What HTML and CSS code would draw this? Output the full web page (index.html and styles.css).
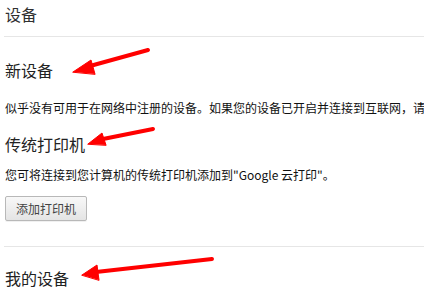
FILE: index.html
```html
<!DOCTYPE html>
<html>
<head>
<meta charset="utf-8">
<link rel="stylesheet" href="styles.css">
</head>
<body>
<div class="page">
  <h1 class="title">设备</h1>
  <div class="sep"></div>
  <h2 class="section first">新设备</h2>
  <p class="text">似乎没有可用于在网络中注册的设备。如果您的设备已开启并连接到互联网，请尝试按照设备说明手册中的说明进行注册。</p>
  <h2 class="section">传统打印机</h2>
  <p class="text text2">您可将连接到您计算机的传统打印机添加到"Google 云打印"。</p>
  <button class="btn">添加打印机</button>
  <div class="sep sep2"></div>
  <h2 class="section last">我的设备</h2>
</div>
<svg class="arrows" width="424" height="290" viewBox="0 0 424 290">
  <g fill="#f00" stroke="#f00" stroke-linecap="round" stroke-linejoin="round">
    <line x1="148" y1="50" x2="90" y2="66" stroke-width="4"/>
    <polygon points="73,72 91,60 95,74" stroke-width="1"/>
    <line x1="153" y1="129" x2="103" y2="139" stroke-width="4"/>
    <polygon points="88,144 102,133 106,145" stroke-width="1"/>
    <line x1="212" y1="259" x2="96" y2="272" stroke-width="4"/>
    <polygon points="82,275 97,265 99,280" stroke-width="1"/>
  </g>
</svg>
</body>
</html>
```
FILE: styles.css
```css
html, body {
  margin: 0;
  padding: 0;
  background: #fff;
}
body {
  width: 424px;
  height: 290px;
  overflow: hidden;
  position: relative;
  font-family: "Noto Sans CJK SC", "Liberation Sans", sans-serif;
  color: #222;
}
.page {
  padding: 4px 0 0 5px;
}
.title {
  margin: 0;
  font-size: 16px;
  line-height: 20px;
  font-weight: normal;
  color: #303030;
}
.sep {
  height: 1px;
  background: #e6e6e6;
  margin: 12px 0 0 -1px;
}
.section {
  margin: 0;
  font-size: 16px;
  line-height: 20px;
  font-weight: normal;
  color: #222;
}
.first { margin-top: 23px; }
.text {
  margin: 20px 0 0;
  font-size: 12px;
  line-height: 16px;
  white-space: nowrap;
  overflow: hidden;
  color: #111;
}
.text + .section { margin-top: 18px; }
.text2 { margin-top: 13px; }
.btn {
  display: block;
  margin: 13px 0 0;
  width: 82px;
  height: 25px;
  padding: 0;
  font-family: "Noto Sans CJK SC", "Liberation Sans", sans-serif;
  font-size: 12px;
  color: #444;
  background: linear-gradient(#f8f8f8, #e4e4e4);
  border: 1px solid #b8b8b8;
  border-radius: 2px;
  box-shadow: 0 1px 0 rgba(0,0,0,0.06);
}
.sep2 { margin-top: 25px; }
.last { margin-top: 21px; }
.arrows {
  position: absolute;
  top: 0;
  left: 0;
}
```
